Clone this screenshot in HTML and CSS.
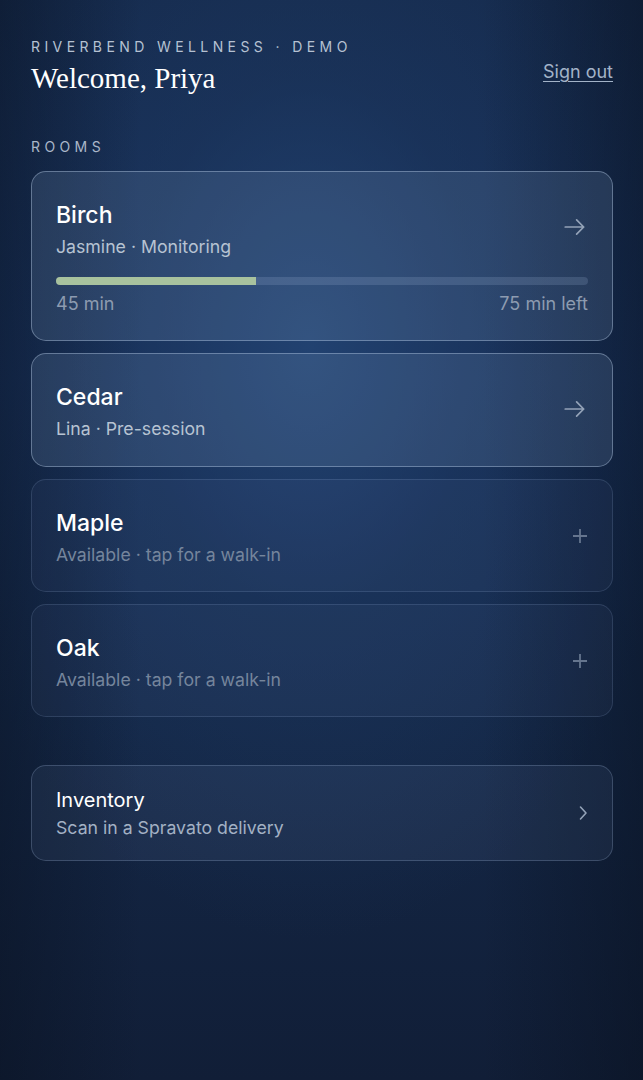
FILE: index.html
```html
<!DOCTYPE html>
<html lang="en">

<head>
    <meta charset="UTF-8">
    <meta name="viewport" content="width=device-width, initial-scale=1.0">
    <title>Riverbend Wellness</title>
    <link rel="stylesheet" href="styles.css">
</head>

<body>
    <main class="page">
        <header class="top">
            <div>
                <div class="eyebrow">Riverbend Wellness · Demo</div>
                <h1 class="welcome">Welcome, Priya</h1>
            </div>
            <a class="signout" href="#">Sign out</a>
        </header>

        <div class="section-label">Rooms</div>

        <div class="rooms">
            <a class="room room-active" href="#">
                <div class="room-row">
                    <div>
                        <div class="room-name">Birch</div>
                        <div class="room-sub">Jasmine · Monitoring</div>
                    </div>
                    <svg class="icon-arrow" viewBox="0 0 24 24" width="26" height="26">
                        <path d="M3 12h17M13.5 5.5 20 12l-6.5 6.5" />
                    </svg>
                </div>
                <div class="progress">
                    <div class="progress-fill" style="width: 37.5%"></div>
                </div>
                <div class="progress-labels">
                    <span>45 min</span>
                    <span>75 min left</span>
                </div>
            </a>

            <a class="room room-active" href="#">
                <div class="room-row">
                    <div>
                        <div class="room-name">Cedar</div>
                        <div class="room-sub">Lina · Pre-session</div>
                    </div>
                    <svg class="icon-arrow" viewBox="0 0 24 24" width="26" height="26">
                        <path d="M3 12h17M13.5 5.5 20 12l-6.5 6.5" />
                    </svg>
                </div>
            </a>

            <a class="room room-free" href="#">
                <div class="room-row">
                    <div>
                        <div class="room-name">Maple</div>
                        <div class="room-sub">Available · tap for a walk-in</div>
                    </div>
                    <svg class="icon-plus" viewBox="0 0 16 16" width="16" height="16">
                        <path d="M8 1v14M1 8h14" />
                    </svg>
                </div>
            </a>

            <a class="room room-free" href="#">
                <div class="room-row">
                    <div>
                        <div class="room-name">Oak</div>
                        <div class="room-sub">Available · tap for a walk-in</div>
                    </div>
                    <svg class="icon-plus" viewBox="0 0 16 16" width="16" height="16">
                        <path d="M8 1v14M1 8h14" />
                    </svg>
                </div>
            </a>
        </div>

        <a class="inventory" href="#">
            <div>
                <div class="inventory-title">Inventory</div>
                <div class="inventory-sub">Scan in a Spravato delivery</div>
            </div>
            <svg class="icon-chevron" viewBox="0 0 16 16" width="16" height="16">
                <path d="M6.5 2l5.5 6-5.5 6" />
            </svg>
        </a>
    </main>
</body>

</html>
```

FILE: styles.css
```css
* {
    box-sizing: border-box;
}

html {
    min-height: 100%;
    background: #0f1b31;
}

body {
    margin: 0;
    min-height: 1080px;
    font-family: Inter, "Noto Sans", sans-serif;
    color: #fff;
    background:
        linear-gradient(90deg, rgba(8, 16, 30, 0.45) 0%, rgba(8, 16, 30, 0) 22%, rgba(8, 16, 30, 0) 75%, rgba(8, 16, 30, 0.5) 100%),
        radial-gradient(ellipse 60% 55% at 48% 32%, rgba(36, 70, 118, 0.8) 0%, rgba(30, 58, 100, 0.45) 45%, rgba(20, 38, 68, 0) 100%),
        linear-gradient(180deg, #152a4c 0%, #17305a 35%, #142848 65%, #111e37 100%);
}

a {
    color: inherit;
    text-decoration: none;
}

.page {
    padding: 39px 30px 40px 31px;
}

.top {
    display: flex;
    justify-content: space-between;
}

.eyebrow {
    font-size: 14px;
    line-height: 16px;
    letter-spacing: 4.4px;
    text-transform: uppercase;
    color: #b5c1d2;
}

.welcome {
    margin: 6px 0 0;
    font-family: "Liberation Serif", "DejaVu Serif", serif;
    font-weight: 400;
    font-size: 29px;
    line-height: 34px;
    color: #fff;
}

.signout {
    align-self: flex-end;
    margin-bottom: 12px;
    font-size: 18px;
    line-height: 22px;
    color: #a3b3c8;
    text-decoration: underline;
    text-underline-offset: 3px;
}

.section-label {
    margin-top: 44px;
    font-size: 14px;
    line-height: 16px;
    letter-spacing: 4.4px;
    text-transform: uppercase;
    color: #aab7c9;
}

.rooms {
    margin-top: 16px;
    display: flex;
    flex-direction: column;
    gap: 12px;
}

.room {
    display: block;
    padding: 26px 24px;
    border-radius: 15px;
}

.room-active {
    background: rgba(140, 170, 210, 0.17);
    border: 1px solid rgba(190, 210, 235, 0.4);
}

.room-free {
    padding-bottom: 25px;
    background: rgba(130, 160, 200, 0.06);
    border: 1px solid rgba(170, 195, 230, 0.16);
}

.room-row {
    display: flex;
    align-items: center;
    justify-content: space-between;
}

.room-name {
    font-size: 23px;
    font-weight: 500;
    line-height: 34px;
    color: #fff;
}

.room-sub {
    margin-top: 4px;
    font-size: 17.7px;
    line-height: 22px;
    color: #b7c3d2;
}

.room-free .room-sub {
    color: #75859c;
}

.icon-arrow path,
.icon-chevron path {
    fill: none;
    stroke: #94a3b8;
    stroke-width: 1.6;
    stroke-linecap: round;
    stroke-linejoin: round;
}

.icon-arrow {
    margin-top: -2px;
}

.icon-plus path {
    fill: none;
    stroke: #65758e;
    stroke-width: 1.8;
}

.progress {
    margin-top: 19px;
    height: 8px;
    border-radius: 4px;
    background: rgba(170, 195, 230, 0.18);
    overflow: hidden;
}

.progress-fill {
    height: 100%;
    background: #a8c29e;
}

.progress-labels {
    margin-top: 9px;
    display: flex;
    justify-content: space-between;
    font-size: 18px;
    line-height: 20px;
    color: #8d9bb0;
}

.inventory {
    margin-top: 48px;
    display: flex;
    align-items: center;
    justify-content: space-between;
    padding: 20px 24px;
    border-radius: 15px;
    background: rgba(130, 160, 200, 0.09);
    border: 1px solid rgba(170, 195, 230, 0.24);
}

.inventory-title {
    font-size: 20px;
    line-height: 28px;
    color: #fff;
}

.inventory-sub {
    margin-top: 2px;
    font-size: 17.7px;
    line-height: 24px;
    color: #a3b1c4;
}

.icon-chevron {
    margin-right: -2px;
}
```
